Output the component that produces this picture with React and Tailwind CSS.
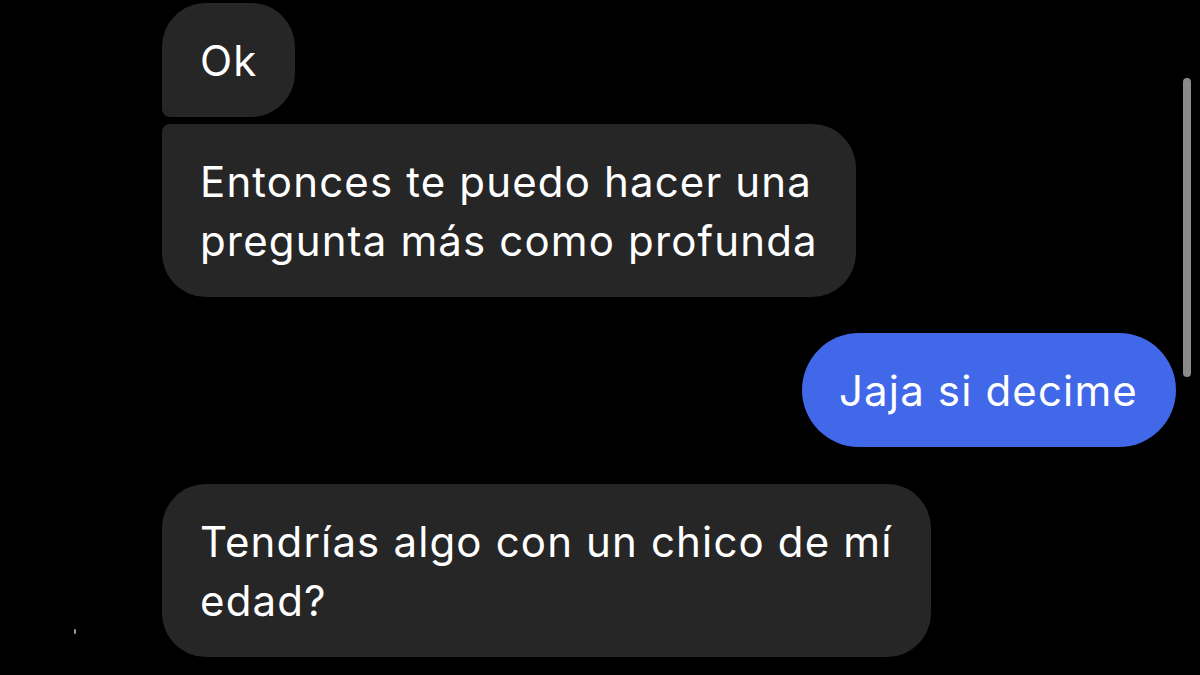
import React from 'react';

// chat thread, dark mode
const messages = [
  { id: 1, from: 'them', text: 'Ok', corners: 'rounded-[44px] rounded-bl-[8px]' },
  { id: 2, from: 'them', text: 'Entonces te puedo hacer una\npregunta más como profunda', corners: 'rounded-[44px] rounded-tl-[8px]' },
  { id: 3, from: 'me', text: 'Jaja si decime', corners: 'rounded-full' },
  { id: 4, from: 'them', text: 'Tendrías algo con un chico de mí\nedad?', corners: 'rounded-[44px]' },
];

const Bubble = ({ msg }) => {
  const mine = msg.from === 'me';
  return (
    <div
      className={`pt-[28px] pb-[27px] text-[42px] leading-[59px] tracking-[1.15px] text-white whitespace-pre-line ${msg.corners} ${
        mine ? 'self-end pl-[37px] pr-[38px] bg-[#4068e8]' : 'self-start px-[38px] bg-[#262626]'
      }`}
    >
      {msg.text}
    </div>
  );
};

export default function App() {
  return (
    <div
      className="relative w-[1200px] h-[675px] overflow-hidden bg-black"
      style={{ fontFamily: 'Inter, "Noto Sans", sans-serif' }}
    >
      <div className="flex flex-col pl-[162px] pr-[24px] pt-[3px]">
        <Bubble msg={messages[0]} />
        <div className="mt-[7px] flex flex-col">
          <Bubble msg={messages[1]} />
        </div>
        <div className="mt-[36px] flex flex-col">
          <Bubble msg={messages[2]} />
        </div>
        <div className="mt-[37px] flex flex-col">
          <Bubble msg={messages[3]} />
        </div>
      </div>

      {/* scroll indicator */}
      <div className="absolute left-[1183px] top-[78px] w-[8px] h-[299px] rounded-full bg-[#8a8a8a]" />
      <div className="absolute left-[74px] top-[629px] w-[2px] h-[5px] rounded-full bg-[#9a9a9a]" />
    </div>
  );
}
